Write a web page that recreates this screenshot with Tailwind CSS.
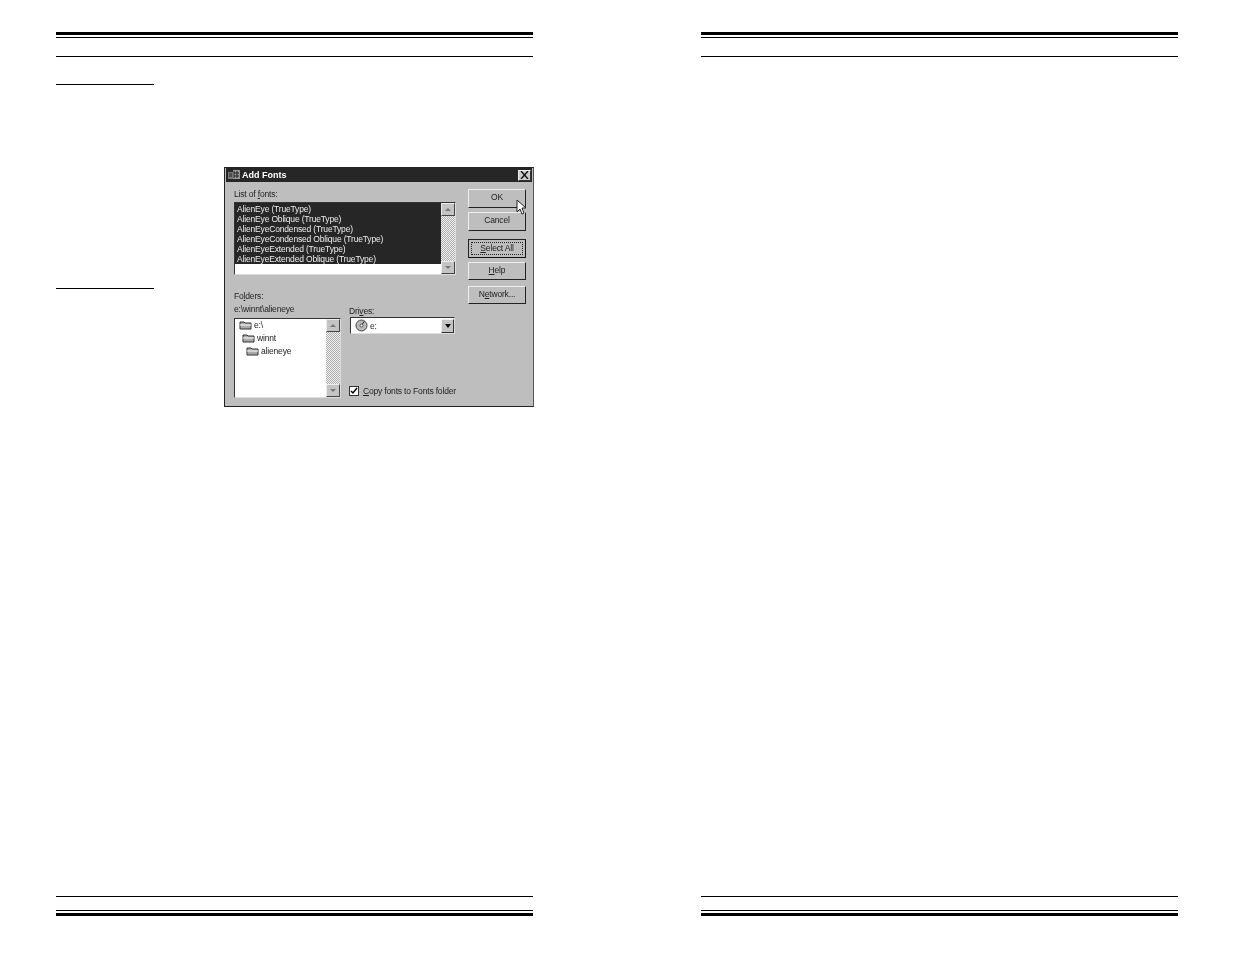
<!DOCTYPE html>
<html lang="en">
<head>
    <meta charset="UTF-8">
    <title>Add Fonts</title>
    <script src="https://cdn.jsdelivr.net/npm/@tailwindcss/browser@4"></script>
</head>
<body class="bg-white">
    <div class="w-[1235px] h-[954px] flex gap-[168px] pl-[56px] overflow-hidden font-['Liberation_Sans',Arial,sans-serif]">

        <!-- left page -->
        <div class="w-[477px] h-full flex flex-col pt-[32px] pb-[38px]">
            <div class="h-[3px] bg-black"></div>
            <div class="h-[1px] bg-black mt-[2px]"></div>
            <div class="h-[1px] bg-black mt-[18px]"></div>

            <div class="flex-1 relative">
                <div class="w-[98px] h-[1px] bg-black mt-[27px]"></div>
                <div class="w-[98px] h-[1px] bg-black mt-[203px]"></div>

                <!-- dialog sits over the page column -->
                <div class="absolute left-[168px] top-[110px] w-[310px] h-[240px] bg-[#bebebe] border border-[#222] border-r-[#555] text-[8.5px] tracking-[-0.17px] leading-[10px] text-[#222] flex flex-col blur-[0.3px]">
                    <div class="h-[14px] mx-[1px] bg-[#262626] flex items-center text-white">
                        <svg class="w-[13px] h-[11px] ml-[2px]" viewBox="0 0 13 11">
                            <rect x="0" y="2" width="5" height="7" fill="#777"/>
                            <rect x="5" y="0" width="7" height="9" fill="#999"/>
                            <path d="M6 1v7M9 1v7M6 3h5M6 6h5M1 4h3M1 6h3" stroke="#222" stroke-width="1"/>
                        </svg>
                        <span class="ml-[1px] font-bold text-[9px] tracking-[0px]">Add Fonts</span>
                        <div class="ml-auto mr-[1px] w-[13px] h-[11px] bg-[#ccc] border border-[#eee] border-r-[#333] border-b-[#333] flex items-center justify-center">
                            <svg class="w-[9px] h-[8px]" viewBox="0 0 9 8"><path d="M1 0l7 8M8 0l-7 8" stroke="#111" stroke-width="1.4"/></svg>
                        </div>
                    </div>

                    <div class="flex-1 flex pl-[9px]">
                        <!-- left side -->
                        <div class="w-[222px] flex flex-col">
                            <div class="mt-[7px] h-[13px]">List of <u>f</u>onts:</div>
                            <div class="h-[73px] flex border border-[#333] border-r-[#ddd] border-b-[#ddd] bg-white">
                                <div class="flex-1 bg-white">
                                    <div class="bg-[#262626] text-[#eee] h-[61px] pl-[2px] pt-[1px]">
                                        <div>AlienEye (TrueType)</div>
                                        <div>AlienEye Oblique (TrueType)</div>
                                        <div>AlienEyeCondensed (TrueType)</div>
                                        <div>AlienEyeCondensed Oblique (TrueType)</div>
                                        <div>AlienEyeExtended (TrueType)</div>
                                        <div>AlienEyeExtended Oblique (TrueType)</div>
                                    </div>
                                </div>
                                <div class="w-[14px] flex flex-col bg-[repeating-conic-gradient(#aaa_0_25%,#f4f4f4_0_50%)] bg-[length:2px_2px]">
                                    <div class="h-[13px] bg-[#c4c4c4] border border-[#eee] border-r-[#444] border-b-[#444] flex items-center justify-center">
                                        <div class="w-0 h-0 border-x-[3px] border-x-transparent border-b-[3px] border-b-[#777]"></div>
                                    </div>
                                    <div class="flex-1"></div>
                                    <div class="h-[13px] bg-[#c4c4c4] border border-[#eee] border-r-[#444] border-b-[#444] flex items-center justify-center">
                                        <div class="w-0 h-0 border-x-[3px] border-x-transparent border-t-[3px] border-t-[#777]"></div>
                                    </div>
                                </div>
                            </div>

                            <div class="flex mt-[16px]">
                                <div class="w-[115px] shrink-0">
                                    <div class="h-[13px]">Fo<u>l</u>ders:</div>
                                    <div class="h-[14px]">e:\winnt\alieneye</div>
                                    <div class="w-[107px] h-[80px] flex border border-[#333] border-r-[#ddd] border-b-[#ddd] bg-white">
                                        <div class="flex-1 pl-[4px]">
                                            <div class="flex items-center h-[12px] gap-[2px]">
                                                <svg class="w-[13px] h-[10px]" viewBox="0 0 13 10"><path d="M1 9V2h4l1 1h6v6z" fill="#aaa" stroke="#333"/><path d="M1 5h11" stroke="#fff"/></svg>
                                                <span>e:\</span>
                                            </div>
                                            <div class="flex items-center h-[13px] gap-[2px] pl-[3px]">
                                                <svg class="w-[13px] h-[10px]" viewBox="0 0 13 10"><path d="M1 9V2h4l1 1h6v6z" fill="#aaa" stroke="#333"/><path d="M1 5h11" stroke="#fff"/></svg>
                                                <span>winnt</span>
                                            </div>
                                            <div class="flex items-center h-[13px] gap-[2px] pl-[7px]">
                                                <svg class="w-[13px] h-[10px]" viewBox="0 0 13 10"><path d="M1 9V2h4l1 1h6v6z" fill="#aaa" stroke="#333"/><path d="M1 5h11" stroke="#fff"/></svg>
                                                <span>alieneye</span>
                                            </div>
                                        </div>
                                        <div class="w-[14px] flex flex-col bg-[repeating-conic-gradient(#aaa_0_25%,#f4f4f4_0_50%)] bg-[length:2px_2px]">
                                            <div class="h-[13px] bg-[#c4c4c4] border border-[#eee] border-r-[#444] border-b-[#444] flex items-center justify-center">
                                                <div class="w-0 h-0 border-x-[3px] border-x-transparent border-b-[3px] border-b-[#777]"></div>
                                            </div>
                                            <div class="flex-1"></div>
                                            <div class="h-[13px] bg-[#c4c4c4] border border-[#eee] border-r-[#444] border-b-[#444] flex items-center justify-center">
                                                <div class="w-0 h-0 border-x-[3px] border-x-transparent border-t-[3px] border-t-[#777]"></div>
                                            </div>
                                        </div>
                                    </div>
                                </div>
                                <div class="w-0 flex-1 flex flex-col pt-[14px] whitespace-nowrap">
                                    <div class="h-[12px] pt-[1px]">Dri<u>v</u>es:</div>
                                    <div class="ml-[1px] mr-[1px] h-[17px] flex items-center border border-[#333] border-r-[#ddd] border-b-[#ddd] bg-white">
                                        <svg class="ml-[4px] w-[13px] h-[13px]" viewBox="0 0 13 13"><circle cx="6.5" cy="6.5" r="5.5" fill="#bbb" stroke="#444"/><circle cx="6.5" cy="6.5" r="1.5" fill="#fff" stroke="#444"/><path d="M9 2.5L7.5 5" stroke="#222"/></svg>
                                        <span class="ml-[2px]">e:</span>
                                        <div class="ml-auto w-[13px] h-[14px] bg-[#c4c4c4] border border-[#eee] border-r-[#333] border-b-[#333] flex items-center justify-center">
                                            <div class="w-0 h-0 border-x-[3.5px] border-x-transparent border-t-[4px] border-t-black"></div>
                                        </div>
                                    </div>
                                    <div class="mt-auto mb-[2px] flex items-center">
                                        <div class="w-[10px] h-[10px] bg-white border border-[#333] flex items-center justify-center">
                                            <svg class="w-[8px] h-[8px]" viewBox="0 0 8 8"><path d="M1 4l2 2 4-5" fill="none" stroke="#000" stroke-width="1.5"/></svg>
                                        </div>
                                        <span class="ml-[4px]"><u>C</u>opy fonts to Fonts folder</span>
                                    </div>
                                </div>
                            </div>
                        </div>

                        <!-- buttons -->
                        <div class="w-[58px] ml-[12px] pt-[7px] flex flex-col text-center">
                            <div class="relative h-[19px] pb-[3px] flex items-center justify-center bg-[#bebebe] border border-[#eee] border-r-[#222] border-b-[#222]">OK
                                <svg class="absolute left-[47px] top-[9px] w-[11px] h-[16px]" viewBox="0 0 11 16"><path d="M1 1v12l3-3 2 5 2-1-2-5h4z" fill="#fff" stroke="#222" stroke-width="1"/></svg>
                            </div>
                            <div class="h-[19px] mt-[4px] pb-[3px] flex items-center justify-center bg-[#bebebe] border border-[#eee] border-r-[#222] border-b-[#222]">Cancel</div>
                            <div class="h-[19px] mt-[8px] p-[2px] bg-[#bebebe] border border-[#222] border-r-[#111] border-b-[#111]">
                                <div class="h-full pb-[2px] flex items-center justify-center border border-dotted border-[#222]"><span><u>S</u>elect All</span></div>
                            </div>
                            <div class="h-[18px] mt-[4px] pb-[2px] flex items-center justify-center bg-[#bebebe] border border-[#eee] border-r-[#222] border-b-[#222]"><span><u>H</u>elp</span></div>
                            <div class="h-[18px] mt-[6px] pb-[2px] flex items-center justify-center bg-[#bebebe] border border-[#eee] border-r-[#222] border-b-[#222]"><span>N<u>e</u>twork...</span></div>
                        </div>
                    </div>
                </div>
            </div>

            <div class="h-[1px] bg-black"></div>
            <div class="h-[1px] bg-black mt-[13px]"></div>
            <div class="h-[3px] bg-black mt-[2px]"></div>
        </div>

        <!-- right page -->
        <div class="w-[477px] h-full flex flex-col pt-[32px] pb-[38px]">
            <div class="h-[3px] bg-black"></div>
            <div class="h-[1px] bg-black mt-[2px]"></div>
            <div class="h-[1px] bg-black mt-[18px]"></div>
            <div class="flex-1"></div>
            <div class="h-[1px] bg-black"></div>
            <div class="h-[1px] bg-black mt-[13px]"></div>
            <div class="h-[3px] bg-black mt-[2px]"></div>
        </div>
    </div>
</body>
</html>
